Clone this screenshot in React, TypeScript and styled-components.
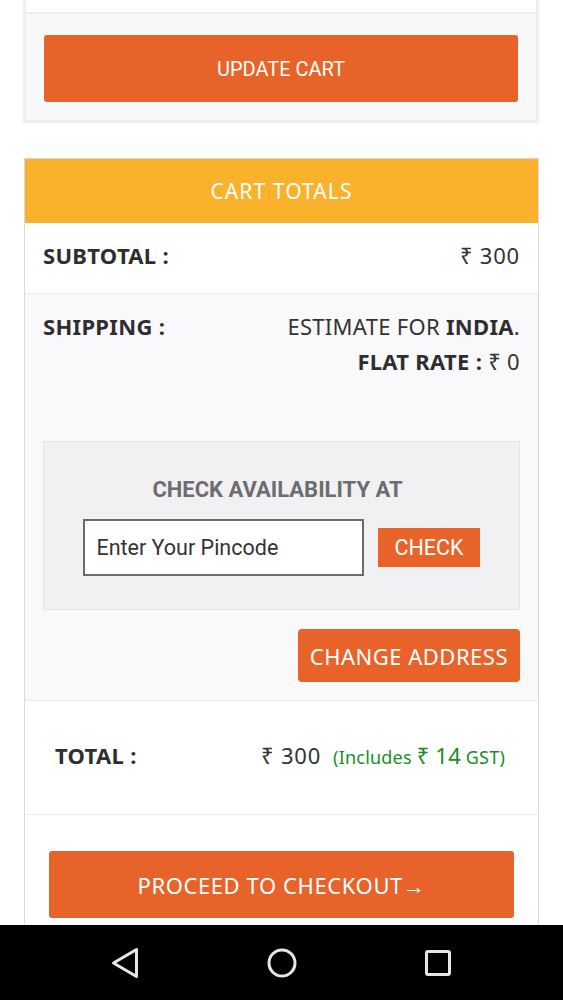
import React from "react";
import styled, { createGlobalStyle } from "styled-components";

const Global = createGlobalStyle`
  html, body { margin: 0; padding: 0; background: #ffffff; }
  * { box-sizing: border-box; }
`;

const ORANGE = "#e8632a";
const UI = `"Noto Sans", "Open Sans", sans-serif`;
const ROBO = `Roboto, "Liberation Sans", sans-serif`;

const Page = styled.div`
  padding: 0 24px 120px 23px;
  font-family: ${UI};
  color: #333;
`;

const ActionsBox = styled.div`
  border: 3px solid #efeff1;
  border-top: none;
  background: #f8f8fa;
`;

const TableTail = styled.div`
  height: 14px;
  background: #fff;
  border-bottom: 2px solid #ededef;
`;

const ActionsBody = styled.div`
  padding: 21px 18px 18px;
`;

const WideButton = styled.button<{ $font?: string; $size?: number; $ls?: number }>`
  display: block;
  width: 100%;
  height: 67px;
  border: none;
  border-radius: 3px;
  background: ${ORANGE};
  color: #fff;
  font-family: ${(p) => p.$font ?? ROBO};
  font-size: ${(p) => p.$size ?? 20}px;
  letter-spacing: ${(p) => p.$ls ?? 0}px;
  cursor: pointer;
`;

const Totals = styled.section`
  margin: 35px 0 0 1px;
  border: 1px solid #d9d9db;
  border-bottom: none;
`;

const Header = styled.h2`
  margin: 0;
  height: 64px;
  background: #fab22c;
  color: #fff;
  display: flex;
  align-items: center;
  justify-content: center;
  font-family: ${UI};
  font-weight: 400;
  font-size: 21px;
  letter-spacing: 1.1px;
`;

const Row = styled.div<{ $bg?: string; $pad?: string }>`
  background: ${(p) => p.$bg ?? "#fff"};
  border-bottom: 1px solid #ececef;
  padding: ${(p) => p.$pad ?? "0 18px"};
`;

const Line = styled.div`
  display: flex;
  justify-content: space-between;
  align-items: center;
  height: 70px;
  padding-bottom: 6px;
`;

const Label = styled.span`
  font-weight: 700;
  font-size: 22px;
  color: #2e2e30;
  letter-spacing: 0.3px;
`;

const Value = styled.span`
  font-size: 22px;
  color: #333;
  letter-spacing: 0.8px;
`;

const ShipRight = styled.div`
  text-align: right;
  font-size: 22px;
  line-height: 35px;
  color: #333;
  letter-spacing: 0.3px;
  b { font-weight: 700; color: #2e2e30; }
`;

const ShipTop = styled.div`
  display: flex;
  justify-content: space-between;
  align-items: flex-start;
  padding-top: 15px;
  line-height: 35px;
`;

const AvailBox = styled.div`
  margin-top: 62px;
  background: #f1f0f3;
  border: 1px solid #e4e4e6;
  padding: 35px 0 33px;
  display: flex;
  flex-direction: column;
  align-items: center;
`;

const AvailTitle = styled.div`
  font-family: ${ROBO};
  font-weight: 700;
  font-size: 22px;
  color: #6d6d70;
  margin-right: 8px;
`;

const PinRow = styled.div`
  display: flex;
  align-items: center;
  gap: 14px;
  margin-top: 17px;
`;

const PinInput = styled.input`
  width: 281px;
  height: 57px;
  border: 2px solid #6a6a6c;
  background: #fff;
  padding: 0 11px;
  font-family: ${ROBO};
  font-size: 21.5px;
  color: #333;
  outline: none;
  &::placeholder { color: #333; }
`;

const SmallButton = styled.button<{ $font?: string; $radius?: number; $pad: string; $h: number; $size: number; $ls?: number }>`
  height: ${(p) => p.$h}px;
  padding: ${(p) => p.$pad};
  border: none;
  border-radius: ${(p) => p.$radius ?? 0}px;
  background: ${ORANGE};
  color: #fff;
  font-family: ${(p) => p.$font ?? ROBO};
  font-size: ${(p) => p.$size}px;
  letter-spacing: ${(p) => p.$ls ?? 0}px;
  white-space: nowrap;
  cursor: pointer;
`;

const AddressWrap = styled.div`
  display: flex;
  justify-content: flex-end;
  padding: 19px 0 18px;
`;

const TotalLine = styled.div`
  display: flex;
  align-items: center;
  justify-content: space-between;
  height: 113px;
  padding: 0 33px 6px 30px;
`;

const TotalValue = styled.div`
  display: flex;
  align-items: baseline;
  gap: 12px;
`;

const Gst = styled.span`
  color: #17901f;
  font-size: 18px;
  letter-spacing: 0.2px;
  strong { font-weight: 400; font-size: 22px; }
`;

const CheckoutWrap = styled.div`
  padding: 36px 24px 40px 24px;
`;

const NavBar = styled.nav`
  position: fixed;
  left: 0;
  right: 0;
  bottom: 0;
  height: 75px;
  background: #000;
  display: flex;
  align-items: center;
  justify-content: space-between;
  padding: 0 107px;
`;

const NavIcon = styled.svg`
  width: 36px;
  height: 36px;
  display: block;
`;

export default function App() {
  return (
    <>
      <Global />
      <Page>
        <ActionsBox>
          <TableTail />
          <ActionsBody>
            <WideButton>UPDATE CART</WideButton>
          </ActionsBody>
        </ActionsBox>

        <Totals>
          <Header>CART TOTALS</Header>
          <Row>
            <Line>
              <Label>SUBTOTAL :</Label>
              <Value>₹ 300</Value>
            </Line>
          </Row>
          <Row $bg="#f9f8fa">
            <ShipTop>
              <Label>SHIPPING :</Label>
              <ShipRight>
                <div>
                  ESTIMATE FOR <b>INDIA</b>.
                </div>
                <div>
                  <b>FLAT RATE :</b> ₹ 0
                </div>
              </ShipRight>
            </ShipTop>
            <AvailBox>
              <AvailTitle>CHECK AVAILABILITY AT</AvailTitle>
              <PinRow>
                <PinInput placeholder="Enter Your Pincode" />
                <SmallButton $h={39} $size={21.5} $pad="0 16px">
                  CHECK
                </SmallButton>
              </PinRow>
            </AvailBox>
            <AddressWrap>
              <SmallButton $h={53} $font={UI} $size={22} $ls={0.5} $radius={4} $pad="0 12px">
                CHANGE ADDRESS
              </SmallButton>
            </AddressWrap>
          </Row>
          <Row $pad="0">
            <TotalLine>
              <Label>TOTAL :</Label>
              <TotalValue>
                <Value>₹ 300</Value>
                <Gst>
                  (Includes <strong>₹ 14</strong> GST)
                </Gst>
              </TotalValue>
            </TotalLine>
          </Row>
          <CheckoutWrap>
            <WideButton $font={UI} $size={22} $ls={0.6}>
              PROCEED TO CHECKOUT→
            </WideButton>
          </CheckoutWrap>
        </Totals>
      </Page>
      <NavBar>
        <NavIcon viewBox="0 0 36 36" aria-label="Back">
          <path
            d="M29.5 4.5 L29.5 31.5 L6.5 18 Z"
            fill="none"
            stroke="#e6e6e6"
            strokeWidth="3"
            strokeLinejoin="round"
          />
        </NavIcon>
        <NavIcon viewBox="0 0 36 36" aria-label="Home">
          <circle cx="18" cy="18" r="13" fill="none" stroke="#e6e6e6" strokeWidth="3" />
        </NavIcon>
        <NavIcon viewBox="0 0 36 36" aria-label="Recents">
          <rect x="6.5" y="6.5" width="23" height="23" rx="1.5" fill="none" stroke="#e6e6e6" strokeWidth="3" />
        </NavIcon>
      </NavBar>
    </>
  );
}
